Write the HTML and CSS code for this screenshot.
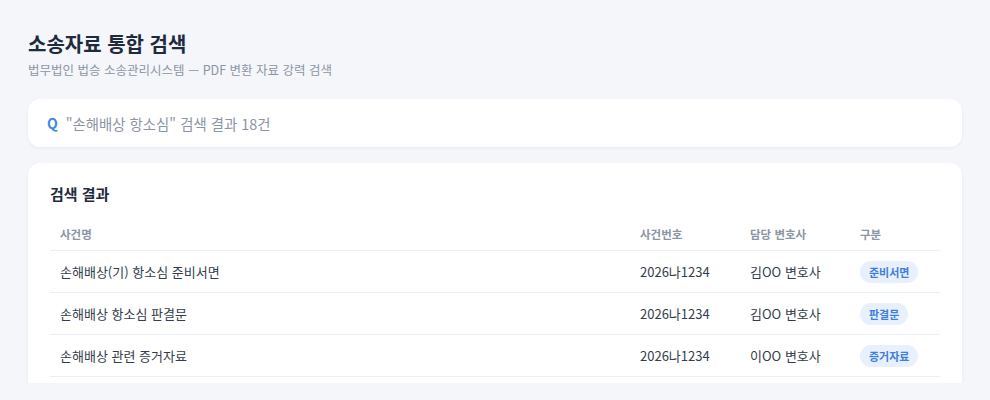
FILE: index.html
```html
<!DOCTYPE html>
<html lang="ko">
<head>
<meta charset="utf-8">
<title>소송자료 통합 검색</title>
<link rel="stylesheet" href="styles.css">
</head>
<body>
<div class="viewport">
  <div class="page">
    <header class="head">
      <h1 class="title">소송자료 통합 검색</h1>
      <p class="subtitle">법무법인 법승 소송관리시스템 — PDF 변환 자료 강력 검색</p>
    </header>
    <div class="search">
      <span class="search-icon">Q</span>
      <span class="search-text">"손해배상 항소심" 검색 결과 18건</span>
    </div>
    <section class="card">
      <h2 class="card-title">검색 결과</h2>
      <table class="results">
        <thead>
          <tr>
            <th class="c-name">사건명</th>
            <th class="c-no">사건번호</th>
            <th class="c-law">담당 변호사</th>
            <th class="c-type">구분</th>
          </tr>
        </thead>
        <tbody>
          <tr>
            <td>손해배상(기) 항소심 준비서면</td>
            <td>2026나1234</td>
            <td>김OO 변호사</td>
            <td><span class="badge">준비서면</span></td>
          </tr>
          <tr>
            <td>손해배상 항소심 판결문</td>
            <td>2026나1234</td>
            <td>김OO 변호사</td>
            <td><span class="badge">판결문</span></td>
          </tr>
          <tr>
            <td>손해배상 관련 증거자료</td>
            <td>2026나1234</td>
            <td>이OO 변호사</td>
            <td><span class="badge">증거자료</span></td>
          </tr>
        </tbody>
      </table>
    </section>
  </div>
</div>
</body>
</html>
```
FILE: styles.css
```css
* { box-sizing: border-box; }
html, body { margin: 0; padding: 0; }
body {
  background: #f4f6fa;
  font-family: "Noto Sans CJK KR", "Noto Sans", sans-serif;
  color: #333d4b;
}
.viewport {
  height: 383px;
  overflow: hidden;
}
.page {
  padding: 32px 28px 0;
}
.title {
  margin: 0;
  font-size: 20px;
  line-height: 24px;
  font-weight: 700;
  color: #1f2b3d;
}
.subtitle {
  margin: 5px 0 0;
  font-size: 12.5px;
  line-height: 18px;
  color: #8c95a3;
}
.search {
  margin-top: 20px;
  height: 48px;
  background: #ffffff;
  border-radius: 12px;
  box-shadow: 0 1px 3px rgba(30, 40, 60, 0.06);
  display: flex;
  align-items: center;
  padding: 0 19px;
  gap: 8px;
}
.search-icon {
  color: #3f86e6;
  font-weight: 700;
  font-size: 14px;
}
.search-text {
  color: #8c95a3;
  font-size: 14.4px;
}
.card {
  margin-top: 16px;
  background: #ffffff;
  border-radius: 12px;
  box-shadow: 0 1px 3px rgba(30, 40, 60, 0.06);
  padding: 20px 22px 22px;
}
.card-title {
  margin: 0 0 8px;
  font-size: 15px;
  line-height: 22px;
  font-weight: 700;
  color: #1f2b3d;
}
.results {
  width: 100%;
  border-collapse: collapse;
  table-layout: fixed;
}
.results th {
  text-align: left;
  font-size: 11.5px;
  line-height: 18px;
  font-weight: 700;
  color: #8c95a3;
  padding: 12px 10px 7px;
  border-bottom: 1px solid #eceff3;
}
.c-name { width: auto; }
.c-no { width: 110px; }
.c-law { width: 110px; }
.c-type { width: 90px; }
.results td {
  font-size: 13px;
  line-height: 21px;
  height: 42px;
  padding: 0 10px;
  border-bottom: 1px solid #eceff3;
  color: #333d4b;
  vertical-align: middle;
}
.badge {
  display: inline-block;
  background: #e8f0fd;
  color: #3f7fdc;
  font-size: 11px;
  font-weight: 700;
  line-height: 22px;
  padding: 0 9px;
  border-radius: 11px;
  vertical-align: middle;
}
```
